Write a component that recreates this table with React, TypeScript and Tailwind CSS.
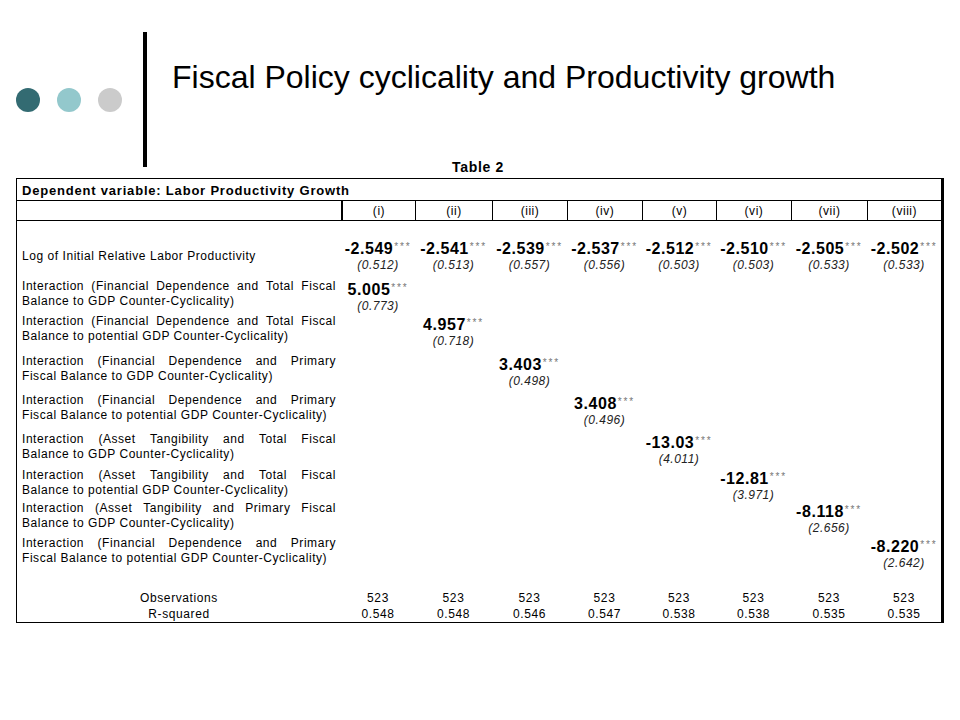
const COLUMNS = ["(i)", "(ii)", "(iii)", "(iv)", "(v)", "(vi)", "(vii)", "(viii)"];

const INITIAL = [
  { coef: "-2.549", se: "(0.512)" },
  { coef: "-2.541", se: "(0.513)" },
  { coef: "-2.539", se: "(0.557)" },
  { coef: "-2.537", se: "(0.556)" },
  { coef: "-2.512", se: "(0.503)" },
  { coef: "-2.510", se: "(0.503)" },
  { coef: "-2.505", se: "(0.533)" },
  { coef: "-2.502", se: "(0.533)" },
];

// one interaction per model, on the diagonal
const INTERACTIONS = [
  {
    line1: "Interaction (Financial Dependence and Total Fiscal",
    line2: "Balance to GDP Counter-Cyclicality)",
    coef: "5.005",
    se: "(0.773)",
    h: "h-[35px]",
  },
  {
    line1: "Interaction (Financial Dependence and Total Fiscal",
    line2: "Balance to potential GDP Counter-Cyclicality)",
    coef: "4.957",
    se: "(0.718)",
    h: "h-[40px]",
  },
  {
    line1: "Interaction (Financial Dependence and Primary",
    line2: "Fiscal Balance to GDP Counter-Cyclicality)",
    coef: "3.403",
    se: "(0.498)",
    h: "h-[39px]",
  },
  {
    line1: "Interaction (Financial Dependence and Primary",
    line2: "Fiscal Balance to potential GDP Counter-Cyclicality)",
    coef: "3.408",
    se: "(0.496)",
    h: "h-[39px]",
  },
  {
    line1: "Interaction (Asset Tangibility and Total Fiscal",
    line2: "Balance to GDP Counter-Cyclicality)",
    coef: "-13.03",
    se: "(4.011)",
    h: "h-[36px]",
  },
  {
    line1: "Interaction (Asset Tangibility and Total Fiscal",
    line2: "Balance to potential GDP Counter-Cyclicality)",
    coef: "-12.81",
    se: "(3.971)",
    h: "h-[33px]",
  },
  {
    line1: "Interaction (Asset Tangibility and Primary Fiscal",
    line2: "Balance to GDP Counter-Cyclicality)",
    coef: "-8.118",
    se: "(2.656)",
    h: "h-[35px]",
  },
  {
    line1: "Interaction (Financial Dependence and Primary",
    line2: "Fiscal Balance to potential GDP Counter-Cyclicality)",
    coef: "-8.220",
    se: "(2.642)",
    h: "h-[54px]",
  },
];

const R_SQUARED = ["0.548", "0.548", "0.546", "0.547", "0.538", "0.538", "0.535", "0.535"];

const GRID = "grid grid-cols-[324px_74px_77px_75px_75px_74px_75px_76px_74px]";

function Coef({ value, se }: { value: string; se: string }) {
  return (
    <div className="flex flex-col items-center">
      <div className="h-[18px] leading-[18px] whitespace-nowrap">
        <span className="text-[16px] font-bold">{value}</span>
        <span className="ml-px text-[10px] tracking-[1.8px] text-[#767676] align-[4px]">***</span>
      </div>
      <div className="h-[18px] leading-[18px] text-[12px] italic tracking-[0.5px] text-[#222]">{se}</div>
    </div>
  );
}

function JustifiedLine({ text }: { text: string }) {
  return (
    <div className="flex justify-between">
      {text.split(" ").map((w, i) => (
        <span key={i}>{w}</span>
      ))}
    </div>
  );
}

export default function App() {
  return (
    <div
      className="w-[960px] h-[720px] bg-white text-black overflow-hidden"
      style={{ fontFamily: '"Liberation Sans", Arial, sans-serif' }}
    >
      <div className="flex items-start pt-[32px]">
        <div className="w-[143px] pt-[56px] pl-[16px] flex gap-[17px]">
          <div className="w-[24px] h-[24px] rounded-full bg-[#336b72]" />
          <div className="w-[24px] h-[24px] rounded-full bg-[#93c8cc]" />
          <div className="w-[24px] h-[24px] rounded-full bg-[#cbcbcb]" />
        </div>
        <div className="w-[4px] h-[135px] bg-black" />
        <div className="flex flex-col">
          <h1 className="pl-[25px] pt-[29px] text-[32px] leading-[32px] whitespace-nowrap">
            Fiscal Policy cyclicality and Productivity growth
          </h1>
          <div className="mt-[66px] w-[662px] text-center text-[14px] leading-[16px] font-bold tracking-[0.7px]">
            Table 2
          </div>
        </div>
      </div>

      <div className="mt-[3px] ml-[16px] w-[928px] border-l border-t border-b border-r-[3px] border-black text-[12px] tracking-[0.55px]">
        <div className="h-[22px] pt-[2px] pl-[5px] text-[13px] leading-[20px] font-bold tracking-[0.8px] border-b border-black">
          Dependent variable: Labor Productivity Growth
        </div>
        <div className={`${GRID} h-[20px] border-b border-black`}>
          <div />
          {COLUMNS.map((c, i) => (
            <div
              key={c}
              className={`${i === 0 ? "border-l-2" : "border-l"} border-black text-center leading-[20px]`}
            >
              {c}
            </div>
          ))}
        </div>

        <div className={`${GRID} h-[58px]`}>
          <div className="pl-[5px] pt-[28px] leading-[15px]">Log of Initial Relative Labor Productivity</div>
          {INITIAL.map((c, i) => (
            <div key={i} className="pt-[17px]">
              <Coef value={c.coef} se={c.se} />
            </div>
          ))}
        </div>

        {INTERACTIONS.map((row, r) => (
          <div key={r} className={`${GRID} ${row.h}`}>
            <div className="pl-[5px] pr-[5px] leading-[15px]">
              <JustifiedLine text={row.line1} />
              <div>{row.line2}</div>
            </div>
            {COLUMNS.map((_, i) => (
              <div key={i}>{i === r && <Coef value={row.coef} se={row.se} />}</div>
            ))}
          </div>
        ))}

        <div className={`${GRID} h-[32px] leading-[16px] text-center tracking-[0.6px]`}>
          <div>
            <div>Observations</div>
            <div>R-squared</div>
          </div>
          {R_SQUARED.map((r, i) => (
            <div key={i}>
              <div>523</div>
              <div>{r}</div>
            </div>
          ))}
        </div>
      </div>
    </div>
  );
}
